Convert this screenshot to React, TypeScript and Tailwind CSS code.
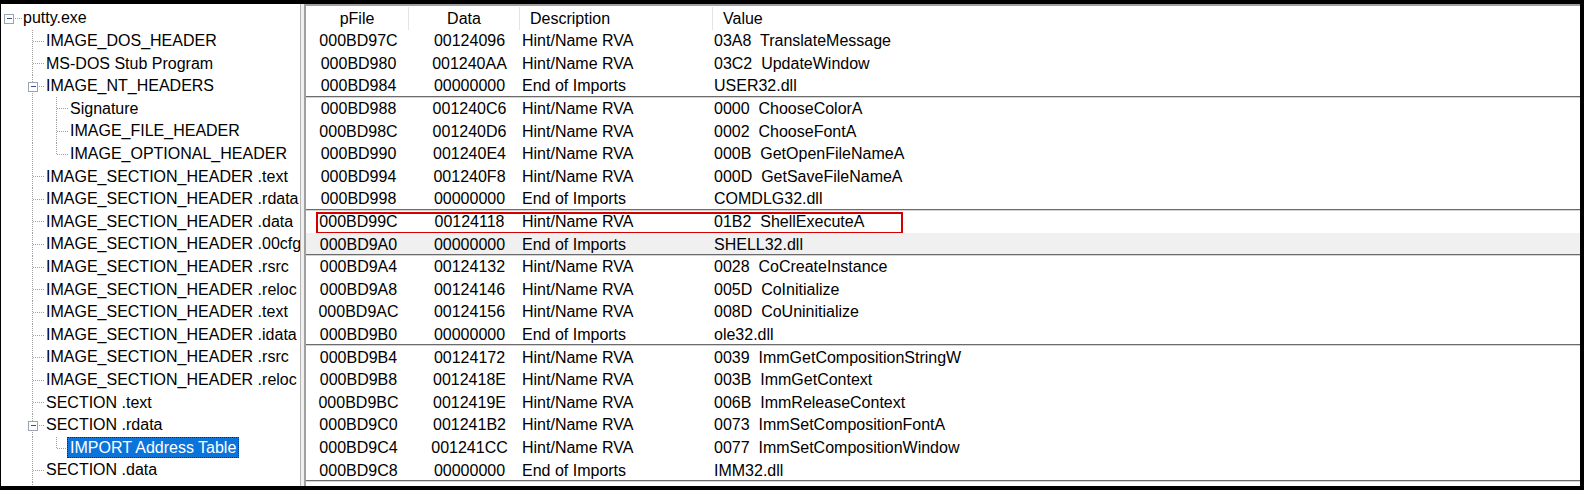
import React from "react";

type Row = { p: string; d: string; desc: string; v: string; end?: boolean; boxed?: boolean; hover?: boolean };

const H = "Hint/Name RVA";
const E = "End of Imports";

const rows: Row[] = [
  { p: "000BD97C", d: "00124096", desc: H, v: "03A8  TranslateMessage" },
  { p: "000BD980", d: "001240AA", desc: H, v: "03C2  UpdateWindow" },
  { p: "000BD984", d: "00000000", desc: E, v: "USER32.dll", end: true },
  { p: "000BD988", d: "001240C6", desc: H, v: "0000  ChooseColorA" },
  { p: "000BD98C", d: "001240D6", desc: H, v: "0002  ChooseFontA" },
  { p: "000BD990", d: "001240E4", desc: H, v: "000B  GetOpenFileNameA" },
  { p: "000BD994", d: "001240F8", desc: H, v: "000D  GetSaveFileNameA" },
  { p: "000BD998", d: "00000000", desc: E, v: "COMDLG32.dll", end: true },
  { p: "000BD99C", d: "00124118", desc: H, v: "01B2  ShellExecuteA", boxed: true },
  { p: "000BD9A0", d: "00000000", desc: E, v: "SHELL32.dll", end: true, hover: true },
  { p: "000BD9A4", d: "00124132", desc: H, v: "0028  CoCreateInstance" },
  { p: "000BD9A8", d: "00124146", desc: H, v: "005D  CoInitialize" },
  { p: "000BD9AC", d: "00124156", desc: H, v: "008D  CoUninitialize" },
  { p: "000BD9B0", d: "00000000", desc: E, v: "ole32.dll", end: true },
  { p: "000BD9B4", d: "00124172", desc: H, v: "0039  ImmGetCompositionStringW" },
  { p: "000BD9B8", d: "0012418E", desc: H, v: "003B  ImmGetContext" },
  { p: "000BD9BC", d: "0012419E", desc: H, v: "006B  ImmReleaseContext" },
  { p: "000BD9C0", d: "001241B2", desc: H, v: "0073  ImmSetCompositionFontA" },
  { p: "000BD9C4", d: "001241CC", desc: H, v: "0077  ImmSetCompositionWindow" },
  { p: "000BD9C8", d: "00000000", desc: E, v: "IMM32.dll", end: true },
  { p: "000BD9CC", d: "001241E6", desc: H, v: "0020  AllocateAndInitializeSid" },
];

type Kind = "root" | "child" | "childBox" | "grand" | "grandLast" | "grandSel";
const tree: { t: string; k: Kind }[] = [
  { t: "putty.exe", k: "root" },
  { t: "IMAGE_DOS_HEADER", k: "child" },
  { t: "MS-DOS Stub Program", k: "child" },
  { t: "IMAGE_NT_HEADERS", k: "childBox" },
  { t: "Signature", k: "grand" },
  { t: "IMAGE_FILE_HEADER", k: "grand" },
  { t: "IMAGE_OPTIONAL_HEADER", k: "grandLast" },
  { t: "IMAGE_SECTION_HEADER .text", k: "child" },
  { t: "IMAGE_SECTION_HEADER .rdata", k: "child" },
  { t: "IMAGE_SECTION_HEADER .data", k: "child" },
  { t: "IMAGE_SECTION_HEADER .00cfg", k: "child" },
  { t: "IMAGE_SECTION_HEADER .rsrc", k: "child" },
  { t: "IMAGE_SECTION_HEADER .reloc", k: "child" },
  { t: "IMAGE_SECTION_HEADER .text", k: "child" },
  { t: "IMAGE_SECTION_HEADER .idata", k: "child" },
  { t: "IMAGE_SECTION_HEADER .rsrc", k: "child" },
  { t: "IMAGE_SECTION_HEADER .reloc", k: "child" },
  { t: "SECTION .text", k: "child" },
  { t: "SECTION .rdata", k: "childBox" },
  { t: "IMPORT Address Table", k: "grandSel" },
  { t: "SECTION .data", k: "child" },
  { t: "SECTION .00cfg", k: "child" },
];

const DOT = "#a0a0a0";
const RH = 22.62;

function Box({ cx, cy }: { cx: number; cy: number }) {
  return (
    <g shapeRendering="crispEdges">
      <rect x={cx - 4.5} y={cy - 4.5} width={9} height={9} fill="#ffffff" stroke="#9aa3ae" strokeWidth={1} />
      <line x1={cx - 2} y1={cy} x2={cx + 3} y2={cy} stroke="#3b4b9b" strokeWidth={1} />
    </g>
  );
}

function Lines({ k }: { k: Kind }) {
  const cy = 11.5;
  const w = k === "root" ? 22 : k === "child" || k === "childBox" ? 45 : k === "grandSel" ? 66 : 69;
  const vl = (x: number, y1: number, y2: number) => (
    <line x1={x} y1={y1} x2={x} y2={y2} stroke={DOT} strokeWidth={1} strokeDasharray="1 1" />
  );
  const hl = (x1: number, x2: number) => (
    <line x1={x1} y1={cy} x2={x2} y2={cy} stroke={DOT} strokeWidth={1} strokeDasharray="1 1" />
  );
  return (
    <svg width={w} height={RH} className="shrink-0" shapeRendering="crispEdges">
      {k === "root" && (
        <>
          {hl(12, 21)}
          <Box cx={7.5} cy={cy} />
        </>
      )}
      {k !== "root" && vl(31.5, 0, RH)}
      {k === "child" && hl(32, 44)}
      {k === "childBox" && (
        <>
          {hl(36, 44)}
          <Box cx={31.5} cy={cy} />
        </>
      )}
      {(k === "grand" || k === "grandLast" || k === "grandSel") && (
        <>
          {vl(55.5, 0, k === "grand" ? RH : cy)}
          {hl(56, 67)}
        </>
      )}
    </svg>
  );
}

export default function App() {
  return (
    <div className="w-[1584px] h-[490px] bg-black pl-[1px] pt-[4px] pr-[4px] pb-[4px] overflow-hidden font-['Liberation_Sans',Arial,sans-serif] text-[16px] text-black">
      <div className="flex h-full w-full overflow-hidden bg-[#f0f0f0]">
        {/* Tree */}
        <div className="w-[300px] shrink-0 h-full bg-white border-r border-[#b4b4b4] pt-[3px] overflow-hidden">
          {tree.map((n, i) => (
            <div key={i} className="flex items-center h-[22.62px] whitespace-nowrap leading-none">
              <Lines k={n.k} />
              {n.k === "grandSel" ? (
                <span className="bg-[#0a74da] text-white px-[3px] h-[21px] flex items-center outline outline-1 outline-dotted outline-[#0d2a5a] -outline-offset-1">
                  {n.t}
                </span>
              ) : (
                <span>{n.t}</span>
              )}
            </div>
          ))}
        </div>
        {/* Splitter gap */}
        <div className="w-[3px] shrink-0 bg-[#f0f0f0]" />
        {/* List */}
        <div className="flex-1 h-full bg-white border-l-2 border-t-2 border-[#a0a0a0] overflow-hidden">
          <div className="flex h-[24px] items-center whitespace-nowrap pt-[1px]">
            <div className="w-[103px] h-full flex items-center justify-center border-r border-[#e3e3e3]">pFile</div>
            <div className="w-[111px] h-full flex items-center justify-center border-r border-[#e3e3e3]">Data</div>
            <div className="w-[193px] h-full flex items-center pl-[10px] border-r border-[#e3e3e3]">Description</div>
            <div className="flex-1 h-full flex items-center pl-[10px]">Value</div>
          </div>
          {rows.map((r, i) => (
            <div
              key={i}
              className={
                "relative flex items-center h-[22.6px] whitespace-pre " +
                (r.hover ? "bg-[#f0f0f0] " : "") +
                (r.end ? "shadow-[inset_0_-1px_0_#d4d4d4,inset_0_-2px_0_#6b6b6b]" : "")
              }
            >
              <div className="w-[103px] text-center pl-[2px]">{r.p}</div>
              <div className="w-[111px] text-center pl-[10px]">{r.d}</div>
              <div className="w-[193px] pl-[2px]">{r.desc}</div>
              <div className="flex-1 pl-[1px]">{r.v}</div>
              {r.boxed && (
                <div className="absolute left-[10px] top-[1.5px] w-[587px] h-[22px] border-2 border-[#d40000] pointer-events-none" />
              )}
            </div>
          ))}
        </div>
      </div>
    </div>
  );
}
